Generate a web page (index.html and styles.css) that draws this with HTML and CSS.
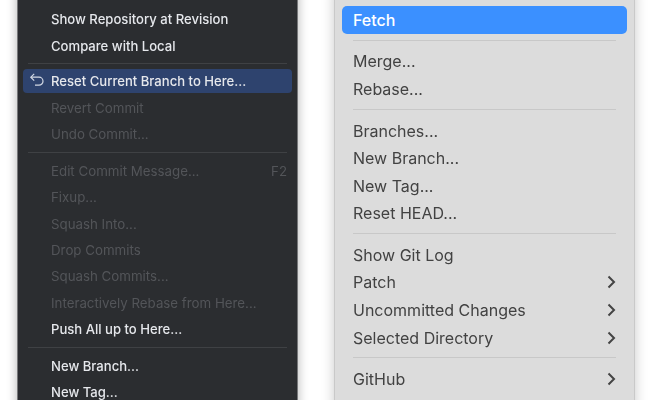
FILE: index.html
```html
<!DOCTYPE html>
<html>

<head>
  <title>Git context menus</title>
  <link rel="stylesheet" href="styles.css">
</head>

<body>
  <div class="page">
    <div class="menu dark">
      <div class="item">Show Repository at Revision</div>
      <div class="item">Compare with Local</div>
      <div class="sep"></div>
      <div class="item active">
        <svg class="undo" width="16" height="16" viewBox="0 0 16 16" fill="none" stroke="#d3d9e4" stroke-width="1.2">
          <path d="M5.2 1.800 1.800 5.200l3.400 3.400"/>
          <path d="M2 5.200h8a4 4 0 0 1 0 8H6"/>
        </svg>
        Reset Current Branch to Here...
      </div>
      <div class="item off">Revert Commit</div>
      <div class="item off">Undo Commit...</div>
      <div class="sep"></div>
      <div class="item off">Edit Commit Message...<span class="key">F2</span></div>
      <div class="item off">Fixup...</div>
      <div class="item off">Squash Into...</div>
      <div class="item off">Drop Commits</div>
      <div class="item off">Squash Commits...</div>
      <div class="item off">Interactively Rebase from Here...</div>
      <div class="item">Push All up to Here...</div>
      <div class="sep"></div>
      <div class="item">New Branch...</div>
      <div class="item">New Tag...</div>
    </div>

    <div class="menu light">
      <div class="item active">Fetch</div>
      <div class="sep"></div>
      <div class="item">Merge...</div>
      <div class="item">Rebase...</div>
      <div class="sep"></div>
      <div class="item">Branches...</div>
      <div class="item">New Branch...</div>
      <div class="item">New Tag...</div>
      <div class="item">Reset HEAD...</div>
      <div class="sep"></div>
      <div class="item">Show Git Log</div>
      <div class="item">Patch<svg class="arrow" width="9" height="14" viewBox="0 0 9 14"><path d="M1.5 1.5 7 7l-5.500 5.500"/></svg></div>
      <div class="item">Uncommitted Changes<svg class="arrow" width="9" height="14" viewBox="0 0 9 14"><path d="M1.5 1.5 7 7l-5.500 5.500"/></svg></div>
      <div class="item">Selected Directory<svg class="arrow" width="9" height="14" viewBox="0 0 9 14"><path d="M1.5 1.5 7 7l-5.500 5.500"/></svg></div>
      <div class="sep"></div>
      <div class="item">GitHub<svg class="arrow" width="9" height="14" viewBox="0 0 9 14"><path d="M1.5 1.5 7 7l-5.500 5.500"/></svg></div>
    </div>
  </div>
</body>

</html>
```
FILE: styles.css
```css
html, body {
  margin: 0;
  height: 100%;
  background-color: #fff;
  overflow: hidden;
}
.page {
  display: flex;
  align-items: flex-start;
  height: 400px;
  padding-left: 17px;
  gap: 36px;
  overflow: hidden;
  filter: blur(0.65px);
}
.menu {
  box-sizing: border-box;
  height: 430px;
  margin-top: -10px;
  flex: none;
  font-family: Inter, "Liberation Sans", sans-serif;
}
.item {
  display: flex;
  align-items: center;
  position: relative;
}

/* left menu */
.dark {
  width: 281px;
  padding: 16px 5px 0;
  background-color: #2b2d30;
  border: 1px solid #77787a;
  border-width: 0 1px;
  box-shadow: 0 0 10px rgba(0, 0, 0, 0.3);
  color: #e6e8ec;
  font-size: 13.1px;
  font-weight: 500;
}
.dark .item {
  height: 26.35px;
  padding-left: 28px;
  padding-right: 5px;
  border-radius: 4px;
}
.dark .sep {
  height: 1px;
  margin: 4.500px 5px 5px;
  background-color: #3f4144;
}
.dark .active {
  background-color: #2e436e;
  height: 24px;
  margin: 1px 0 1.400px;
}
.dark .off {
  color: #535559;
  font-size: 13.3px;
  font-weight: 400;
}
.undo {
  position: absolute;
  left: 6px;
  top: 3px;
}
.key {
  margin-left: auto;
}

/* right menu */
.light {
  width: 301px;
  padding: 16px 7px 0;
  background-color: #dcdcdc;
  border: 1px solid #c9c9c9;
  border-width: 0 1px;
  box-shadow: 0 0 12px rgba(0, 0, 0, 0.22);
  color: #424242;
  font-size: 16px;
}
.light .item {
  height: 27.55px;
  padding: 0 11px;
  border-radius: 5px;
}
.light .sep {
  height: 1px;
  margin: 6.100px 11px 7px;
  background-color: #c8c8c8;
}
.light .active {
  background-color: #3b90ff;
  color: #fff;
  font-weight: 500;
}
.arrow {
  margin-left: auto;
  fill: none;
  stroke: #444;
  stroke-width: 2;
}
```
